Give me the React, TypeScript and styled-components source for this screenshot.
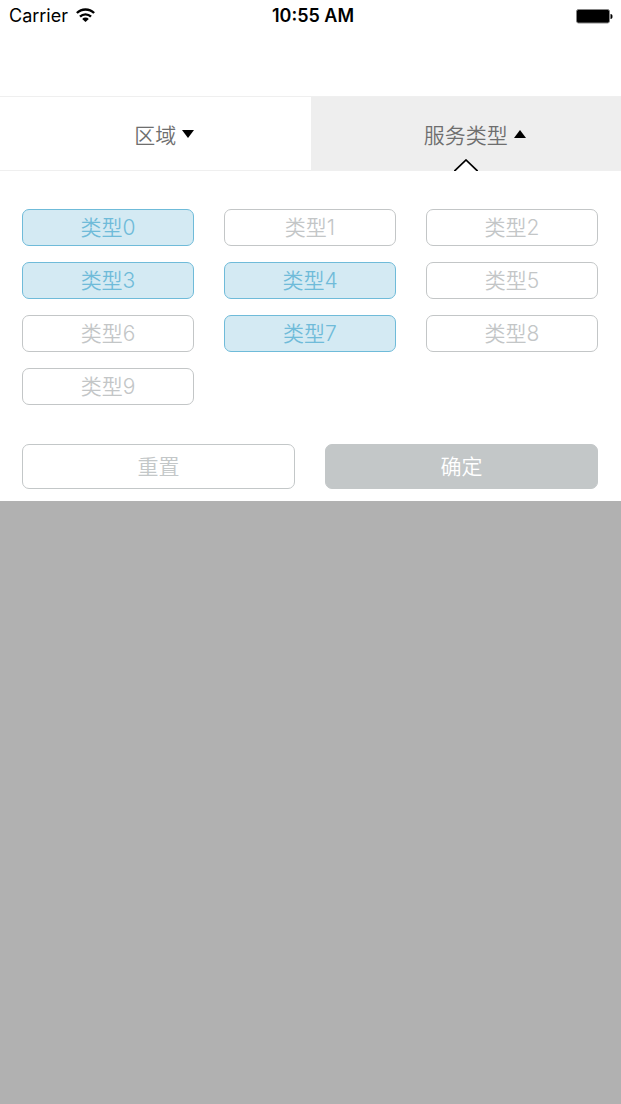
import React, { useState } from "react";
import styled, { createGlobalStyle } from "styled-components";

const GlobalStyle = createGlobalStyle`
  *, *::before, *::after { box-sizing: border-box; }
  body {
    margin: 0;
    background: #ffffff;
    font-family: Inter, "Noto Sans CJK SC", sans-serif;
  }
  button { font-family: inherit; margin: 0; padding: 0; cursor: pointer; }
`;

const Screen = styled.div`
  display: flex;
  flex-direction: column;
  min-height: 100vh;
`;

const StatusBar = styled.header`
  display: grid;
  grid-template-columns: 1fr auto 1fr;
  align-items: center;
  height: 32px;
  padding: 0 8px 0 9px;
  font-size: 18px;
  line-height: 32px;
  color: #000000;
`;

const Carrier = styled.div`
  display: flex;
  align-items: center;
  gap: 8px;
`;

const Clock = styled.time`
  padding-left: 4px;
  font-weight: 600;
`;

const BatterySlot = styled.div`
  display: flex;
  justify-content: flex-end;
`;

const TabBar = styled.nav`
  display: grid;
  grid-template-columns: 1fr 1fr;
  height: 75px;
  margin-top: 64px;
  border-top: 1px solid #efefef;
  border-bottom: 1px solid #efefef;
`;

const Tab = styled.button<{ $open: boolean }>`
  position: relative;
  display: grid;
  grid-template-columns: 1fr auto 1fr;
  align-items: center;
  column-gap: 6px;
  padding-top: 4px;
  border: 0;
  background: ${(p) => (p.$open ? "#eeeeee" : "#ffffff")};
  color: #6e6e6e;
  font-size: 21px;
  font-weight: 350;
  line-height: 30px;
`;

const TabLabel = styled.span`
  grid-column: 2;
`;

const Caret = styled.svg`
  display: block;
  margin-bottom: 4px;
`;

const Pointer = styled.svg`
  position: absolute;
  left: calc(50% - 12px);
  bottom: -1px;
`;

const Panel = styled.main`
  padding: 38px 23px 12px 22px;
  background: #ffffff;
`;

const Options = styled.div`
  display: grid;
  grid-template-columns: repeat(3, 1fr);
  gap: 16px 30px;
`;

const Actions = styled.div`
  display: grid;
  grid-template-columns: 1fr 1fr;
  gap: 30px;
  margin-top: 39px;
`;

const Chip = styled.button<{ $selected: boolean }>`
  height: 37px;
  border: 1px solid ${(p) => (p.$selected ? "#6fbbd9" : "#c3c6c7")};
  border-radius: 7px;
  background: ${(p) => (p.$selected ? "#d4eaf3" : "#ffffff")};
  color: ${(p) => (p.$selected ? "#6fbbd9" : "#c3c6c7")};
  font-size: 21px;
  font-weight: 350;
  line-height: 35px;
`;

const ActionButton = styled.button<{ $filled?: boolean }>`
  height: 45px;
  border: 1px solid #c3c7c8;
  border-radius: 7px;
  background: ${(p) => (p.$filled ? "#c3c7c8" : "#ffffff")};
  color: ${(p) => (p.$filled ? "#ffffff" : "#c3c7c8")};
  font-size: 21px;
  font-weight: 350;
  line-height: 43px;
`;

const Backdrop = styled.div`
  flex: 1;
  background: #b1b1b1;
`;

const WifiIcon = () => (
  <svg width="19" height="16" viewBox="0 0 19 16" aria-hidden="true">
    <g fill="none" stroke="#000000" strokeWidth="2.4">
      <path d="M0.9 5a12.2 12.2 0 0 1 17.2 0" />
      <path d="M4 8.6a7.8 7.8 0 0 1 11 0" />
    </g>
    <path d="M9.5 14 6.2 10.9a4.6 4.6 0 0 1 6.6 0Z" fill="#000000" />
  </svg>
);

const BatteryIcon = () => (
  <svg width="37" height="15" viewBox="0 0 37 15" aria-hidden="true">
    <rect x="0.5" y="0.5" width="33" height="13.5" rx="2" fill="#000000" stroke="#858585" />
    <path d="M34.5 5c1.6 0 2 1 2 2.5s-.4 2.5-2 2.5Z" fill="#000000" />
  </svg>
);

const TabCaret = ({ up }: { up: boolean }) => (
  <Caret width="12" height="8" viewBox="0 0 12 8" aria-hidden="true">
    <path d={up ? "M0 8 6 0l6 8Z" : "M0 0h12L6 8Z"} fill="#000000" />
  </Caret>
);

const tabs = ["区域", "服务类型"];
const options = Array.from({ length: 10 }, (_, i) => `类型${i}`);

export default function App() {
  const [openTab, setOpenTab] = useState(1);
  const [selected, setSelected] = useState<number[]>([0, 3, 4, 7]);

  const toggle = (index: number) =>
    setSelected((current) =>
      current.includes(index) ? current.filter((i) => i !== index) : [...current, index]
    );

  return (
    <Screen>
      <GlobalStyle />
      <StatusBar>
        <Carrier>
          <span>Carrier</span>
          <WifiIcon />
        </Carrier>
        <Clock>10:55 AM</Clock>
        <BatterySlot>
          <BatteryIcon />
        </BatterySlot>
      </StatusBar>
      <TabBar>
        {tabs.map((label, index) => (
          <Tab
            key={label}
            type="button"
            $open={openTab === index}
            aria-expanded={openTab === index}
            onClick={() => setOpenTab(index)}
          >
            <TabLabel>{label}</TabLabel>
            <TabCaret up={openTab === index} />
            {openTab === index && (
              <Pointer width="24" height="12" viewBox="0 0 24 12" aria-hidden="true">
                <path d="M0 12.5 12 1l12 11.5" fill="#ffffff" stroke="#000000" strokeWidth="1.7" />
              </Pointer>
            )}
          </Tab>
        ))}
      </TabBar>
      <Panel>
        <Options>
          {options.map((label, index) => (
            <Chip
              key={label}
              type="button"
              $selected={selected.includes(index)}
              aria-pressed={selected.includes(index)}
              onClick={() => toggle(index)}
            >
              {label}
            </Chip>
          ))}
        </Options>
        <Actions>
          <ActionButton type="button" onClick={() => setSelected([])}>
            重置
          </ActionButton>
          <ActionButton type="button" $filled>
            确定
          </ActionButton>
        </Actions>
      </Panel>
      <Backdrop />
    </Screen>
  );
}
